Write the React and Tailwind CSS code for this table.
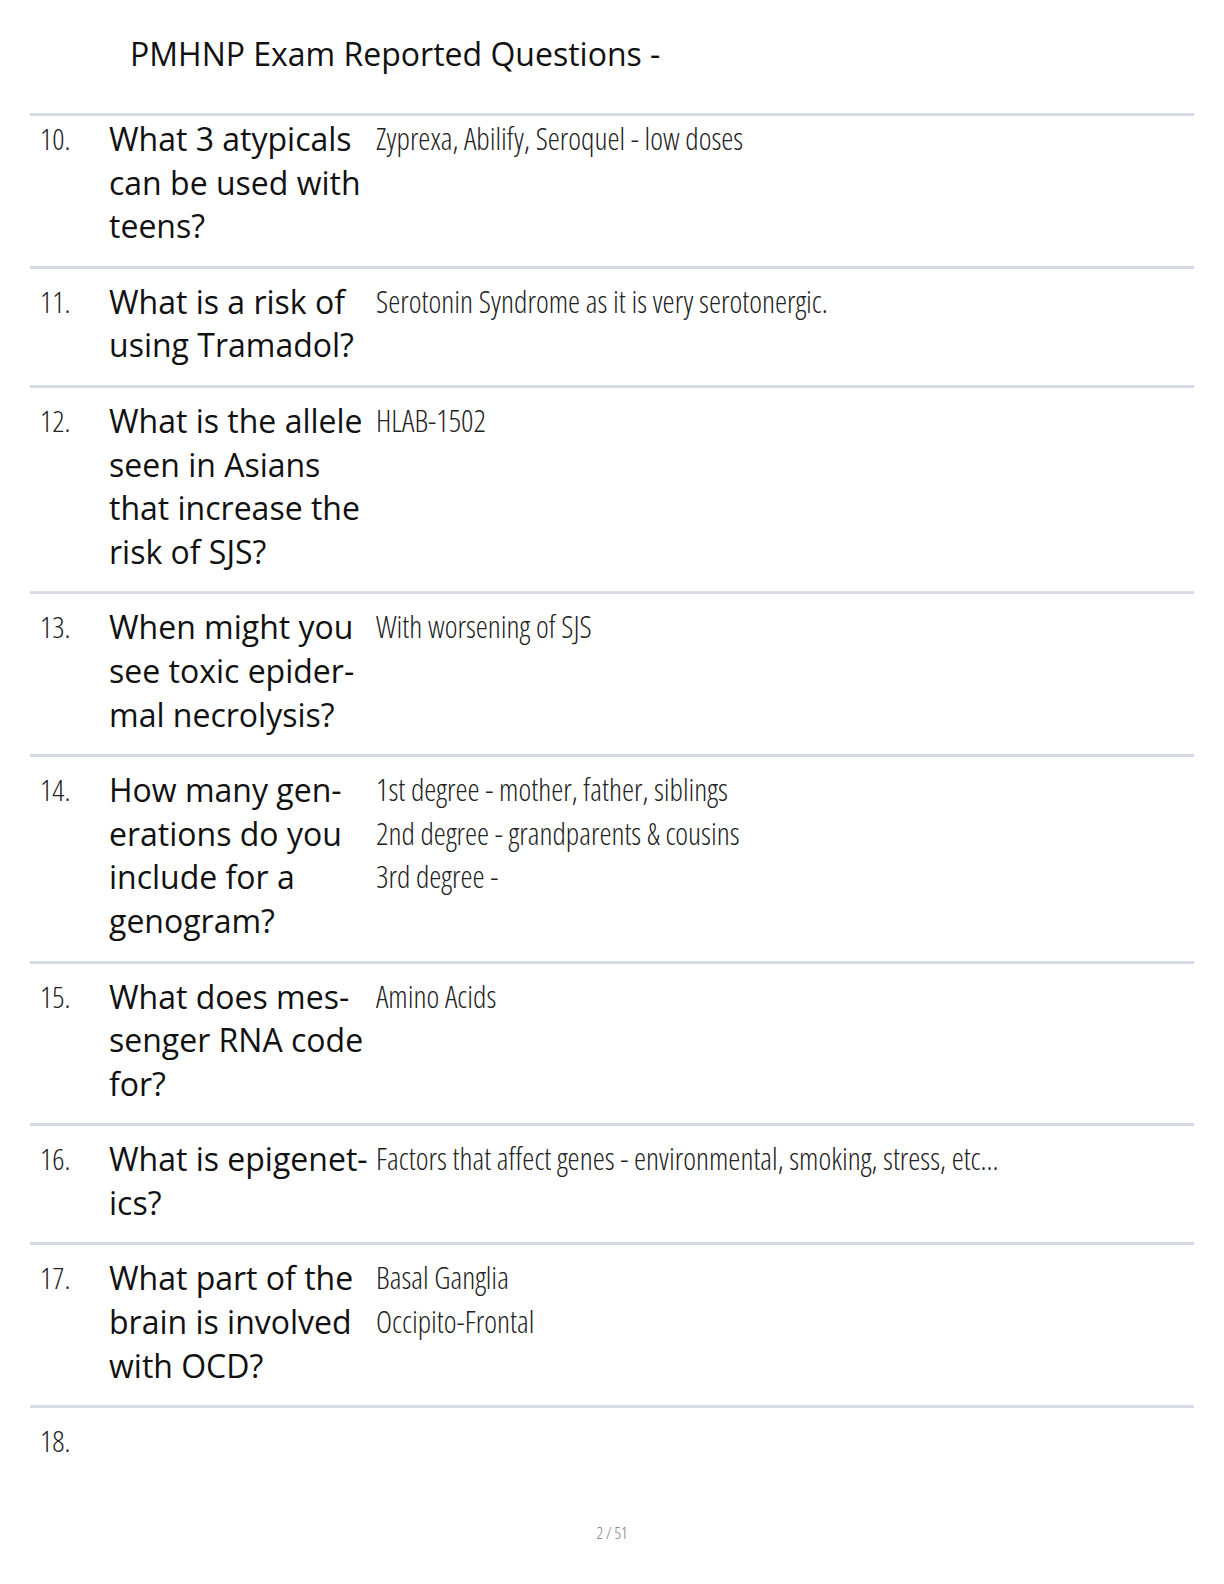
import React from 'react';

const rows = [
  {
    n: '10.',
    q: ['What 3 atypicals', 'can be used with', 'teens?'],
    a: ['Zyprexa, Abilify, Seroquel - low doses'],
  },
  { n: '11.', q: ['What is a risk of', 'using Tramadol?'], a: ['Serotonin Syndrome as it is very serotonergic.'] },
  {
    n: '12.',
    q: ['What is the allele', 'seen in Asians', 'that increase the', 'risk of SJS?'],
    a: ['HLAB-1502'],
  },
  { n: '13.', q: ['When might you', 'see toxic epider-', 'mal necrolysis?'], a: ['With worsening of SJS'] },
  {
    n: '14.',
    q: ['How many gen-', 'erations do you', 'include for a', 'genogram?'],
    a: ['1st degree - mother, father, siblings', '2nd degree - grandparents & cousins', '3rd degree -'],
  },
  { n: '15.', q: ['What does mes-', 'senger RNA code', 'for?'], a: ['Amino Acids'] },
  {
    n: '16.',
    q: ['What is epigenet-', 'ics?'],
    a: ['Factors that affect genes - environmental, smoking, stress, etc...'],
  },
  { n: '17.', q: ['What part of the', 'brain is involved', 'with OCD?'], a: ['Basal Ganglia', 'Occipito-Frontal'] },
  { n: '18.', q: [], a: [] },
];

const Row = ({ row, first }) => (
  <div
    className={`flex border-t-[3px] border-[#d7dbe5] pb-[18px] ${first ? 'pt-[1px]' : 'pt-[11px]'}`}
  >
    <div className="w-[79px] shrink-0 pl-[10px] font-['Open_Sans',sans-serif] font-light [font-stretch:75%] text-[30px] leading-[43.6px] text-[#222]">
      {row.n}
    </div>
    <div className="w-[267px] shrink-0 font-['Open_Sans',sans-serif] font-medium text-[32px] leading-[43.6px] text-[#111]">
      {row.q.map((line) => (
        <div key={line} className="whitespace-nowrap">
          {line}
        </div>
      ))}
    </div>
    <div className="flex-1 font-['Open_Sans',sans-serif] font-light [font-stretch:75%] text-[30.5px] leading-[43.6px] text-[#222]">
      {row.a.map((line) => (
        <div key={line} className="whitespace-nowrap">
          {line}
        </div>
      ))}
    </div>
  </div>
);

export default function App() {
  return (
    <div className="w-[1224px] h-[1584px] bg-white flex flex-col">
      <div className="h-[113px] pt-[32px] pl-[130px] font-['Open_Sans',sans-serif] text-[32px] leading-[43px] text-[#111]">
        PMHNP Exam Reported Questions -
      </div>
      <div className="mx-[30px]">
        {rows.map((row, i) => (
          <Row key={row.n} row={row} first={i === 0} />
        ))}
      </div>
      <div className="mt-auto pb-[42px] text-center font-['Open_Sans',sans-serif] font-light [font-stretch:75%] text-[16px] leading-[18px] text-[#777]">
        2 / 51
      </div>
    </div>
  );
}
